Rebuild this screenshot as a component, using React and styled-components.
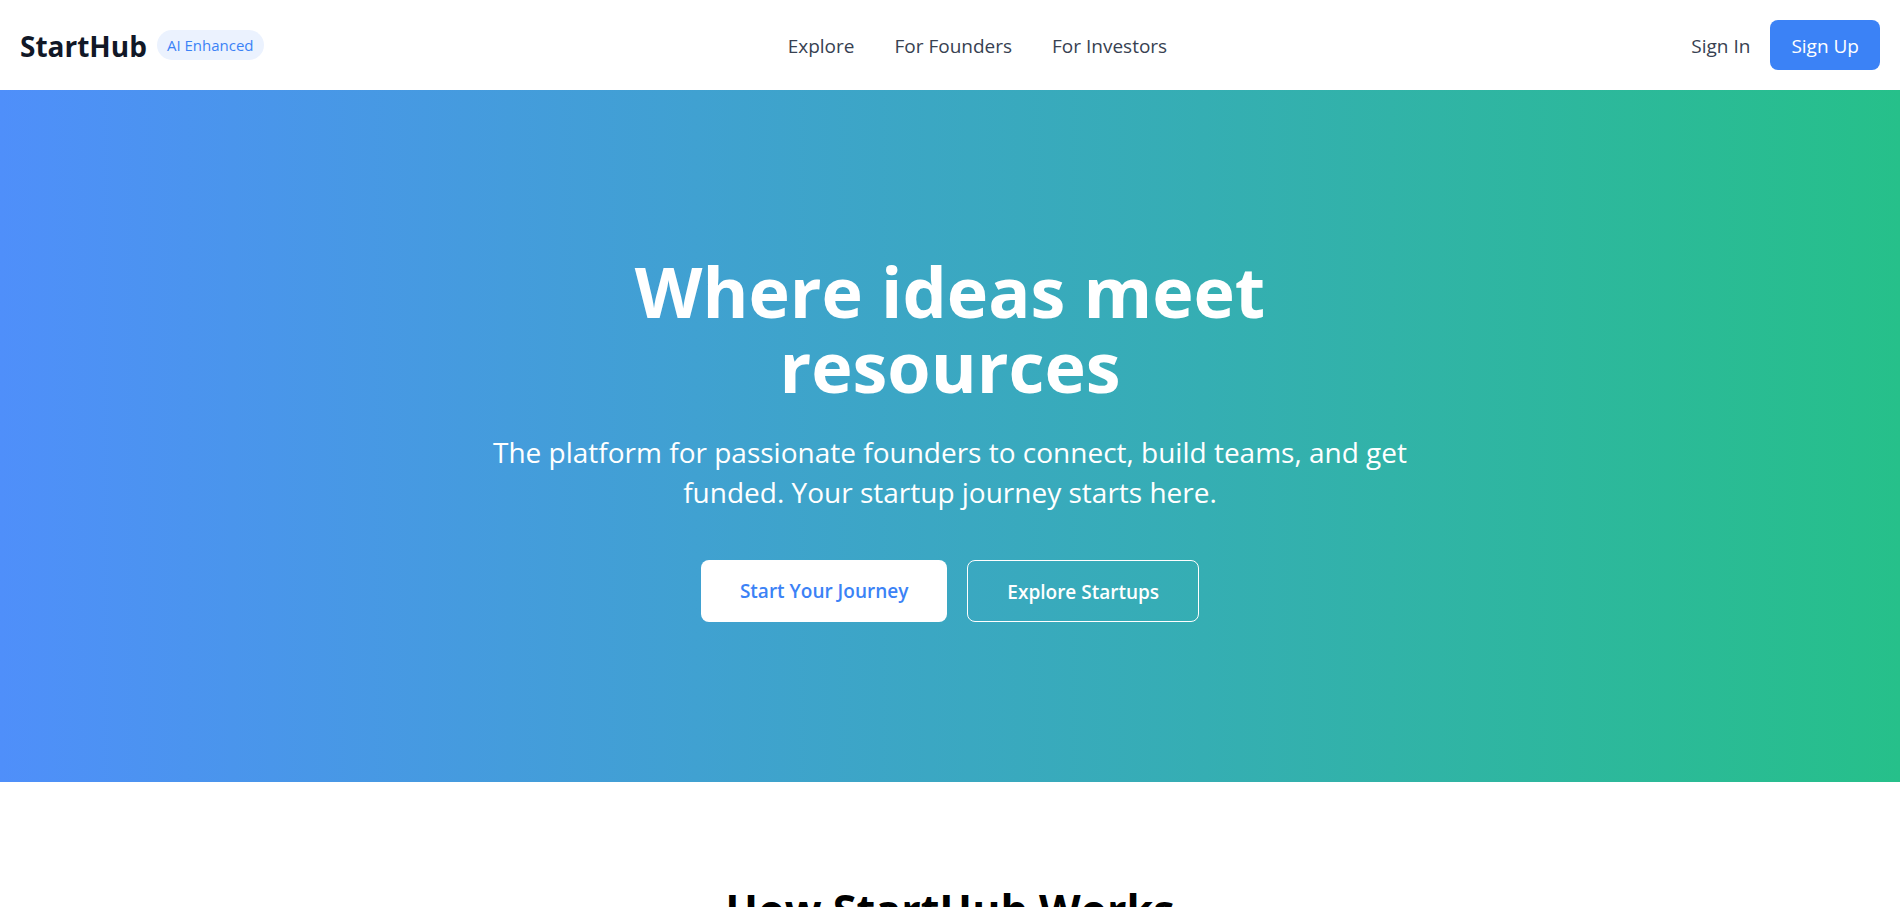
import React from "react";
import styled, { createGlobalStyle } from "styled-components";

const GlobalStyle = createGlobalStyle`
  *, *::before, *::after { box-sizing: border-box; }
  body {
    margin: 0;
    background: #ffffff;
    color: #000000;
    font-family: "Segoe UI", "Open Sans", "Noto Sans", sans-serif;
    font-size: 19px;
    line-height: 30px;
  }
  h1, h2, p { margin: 0; }
  a { color: inherit; text-decoration: none; }
`;

const Header = styled.header`
  display: flex;
  align-items: center;
  justify-content: space-between;
  padding: 20px;
`;

const Brand = styled.div`
  display: flex;
  align-items: center;
  gap: 10px;
`;

const Logo = styled.a`
  && { color: #111827; }
  padding-top: 2px;
  font-size: 28px;
  font-weight: 700;
  line-height: 40px;
`;

const Badge = styled.span`
  padding: 5px 10px;
  border-radius: 15px;
  background: #ebf2fe;
  color: #3b82f6;
  font-size: 15px;
  font-weight: 500;
  line-height: 20px;
`;

const Nav = styled.nav`
  display: flex;
  gap: 40px;
`;

const NavLink = styled.a`
  && { color: #374151; }
  padding-top: 2px;
`;

const Account = styled.div`
  display: flex;
  align-items: center;
  gap: 20px;
`;

const SignUp = styled.button`
  padding: 11px 21px 9px;
  border: 0;
  border-radius: 8px;
  background: #3b82f6;
  color: #ffffff;
  font: inherit;
  cursor: pointer;
`;

const Hero = styled.section`
  display: flex;
  flex-direction: column;
  align-items: center;
  padding: 164px 20px 160px;
  background: linear-gradient(to right, #4f8ffa, #26c08a);
  color: #ffffff;
  text-align: center;
`;

const HeroTitle = styled.h1`
  max-width: 960px;
  margin-bottom: 28px;
  font-size: 70px;
  font-weight: 700;
  line-height: 75px;
`;

const HeroText = styled.p`
  max-width: 960px;
  margin-bottom: 48px;
  font-size: 28px;
  line-height: 40px;
`;

const Actions = styled.div`
  display: flex;
  justify-content: center;
  gap: 20px;
`;

const Action = styled.a`
  padding: ${(p) => (p.$outlined ? "16px 39px 14px" : "16px 39px")};
  border: ${(p) => (p.$outlined ? "1px solid #ffffff" : "0")};
  border-radius: 8px;
  background: ${(p) => (p.$outlined ? "transparent" : "#ffffff")};
  && { color: ${(p) => (p.$outlined ? "#ffffff" : "#3b82f6")}; }
  font-weight: 600;
`;

const Works = styled.section`
  padding: 103px 20px;
  text-align: center;
`;

const SectionTitle = styled.h2`
  font-size: 43px;
  font-weight: 700;
  line-height: 50px;
`;

export default function App() {
  return (
    <>
      <GlobalStyle />
      <Header>
        <Brand>
          <Logo href="#">StartHub</Logo>
          <Badge>AI Enhanced</Badge>
        </Brand>
        <Nav>
          <NavLink href="#explore">Explore</NavLink>
          <NavLink href="#founders">For Founders</NavLink>
          <NavLink href="#investors">For Investors</NavLink>
        </Nav>
        <Account>
          <NavLink href="#signin">Sign In</NavLink>
          <SignUp type="button">Sign Up</SignUp>
        </Account>
      </Header>
      <main>
        <Hero>
          <HeroTitle>Where ideas meet resources</HeroTitle>
          <HeroText>
            The platform for passionate founders to connect, build teams, and
            get funded. Your startup journey starts here.
          </HeroText>
          <Actions>
            <Action href="#start">Start Your Journey</Action>
            <Action href="#explore" $outlined>Explore Startups</Action>
          </Actions>
        </Hero>
        <Works>
          <SectionTitle>How StartHub Works</SectionTitle>
        </Works>
      </main>
    </>
  );
}
